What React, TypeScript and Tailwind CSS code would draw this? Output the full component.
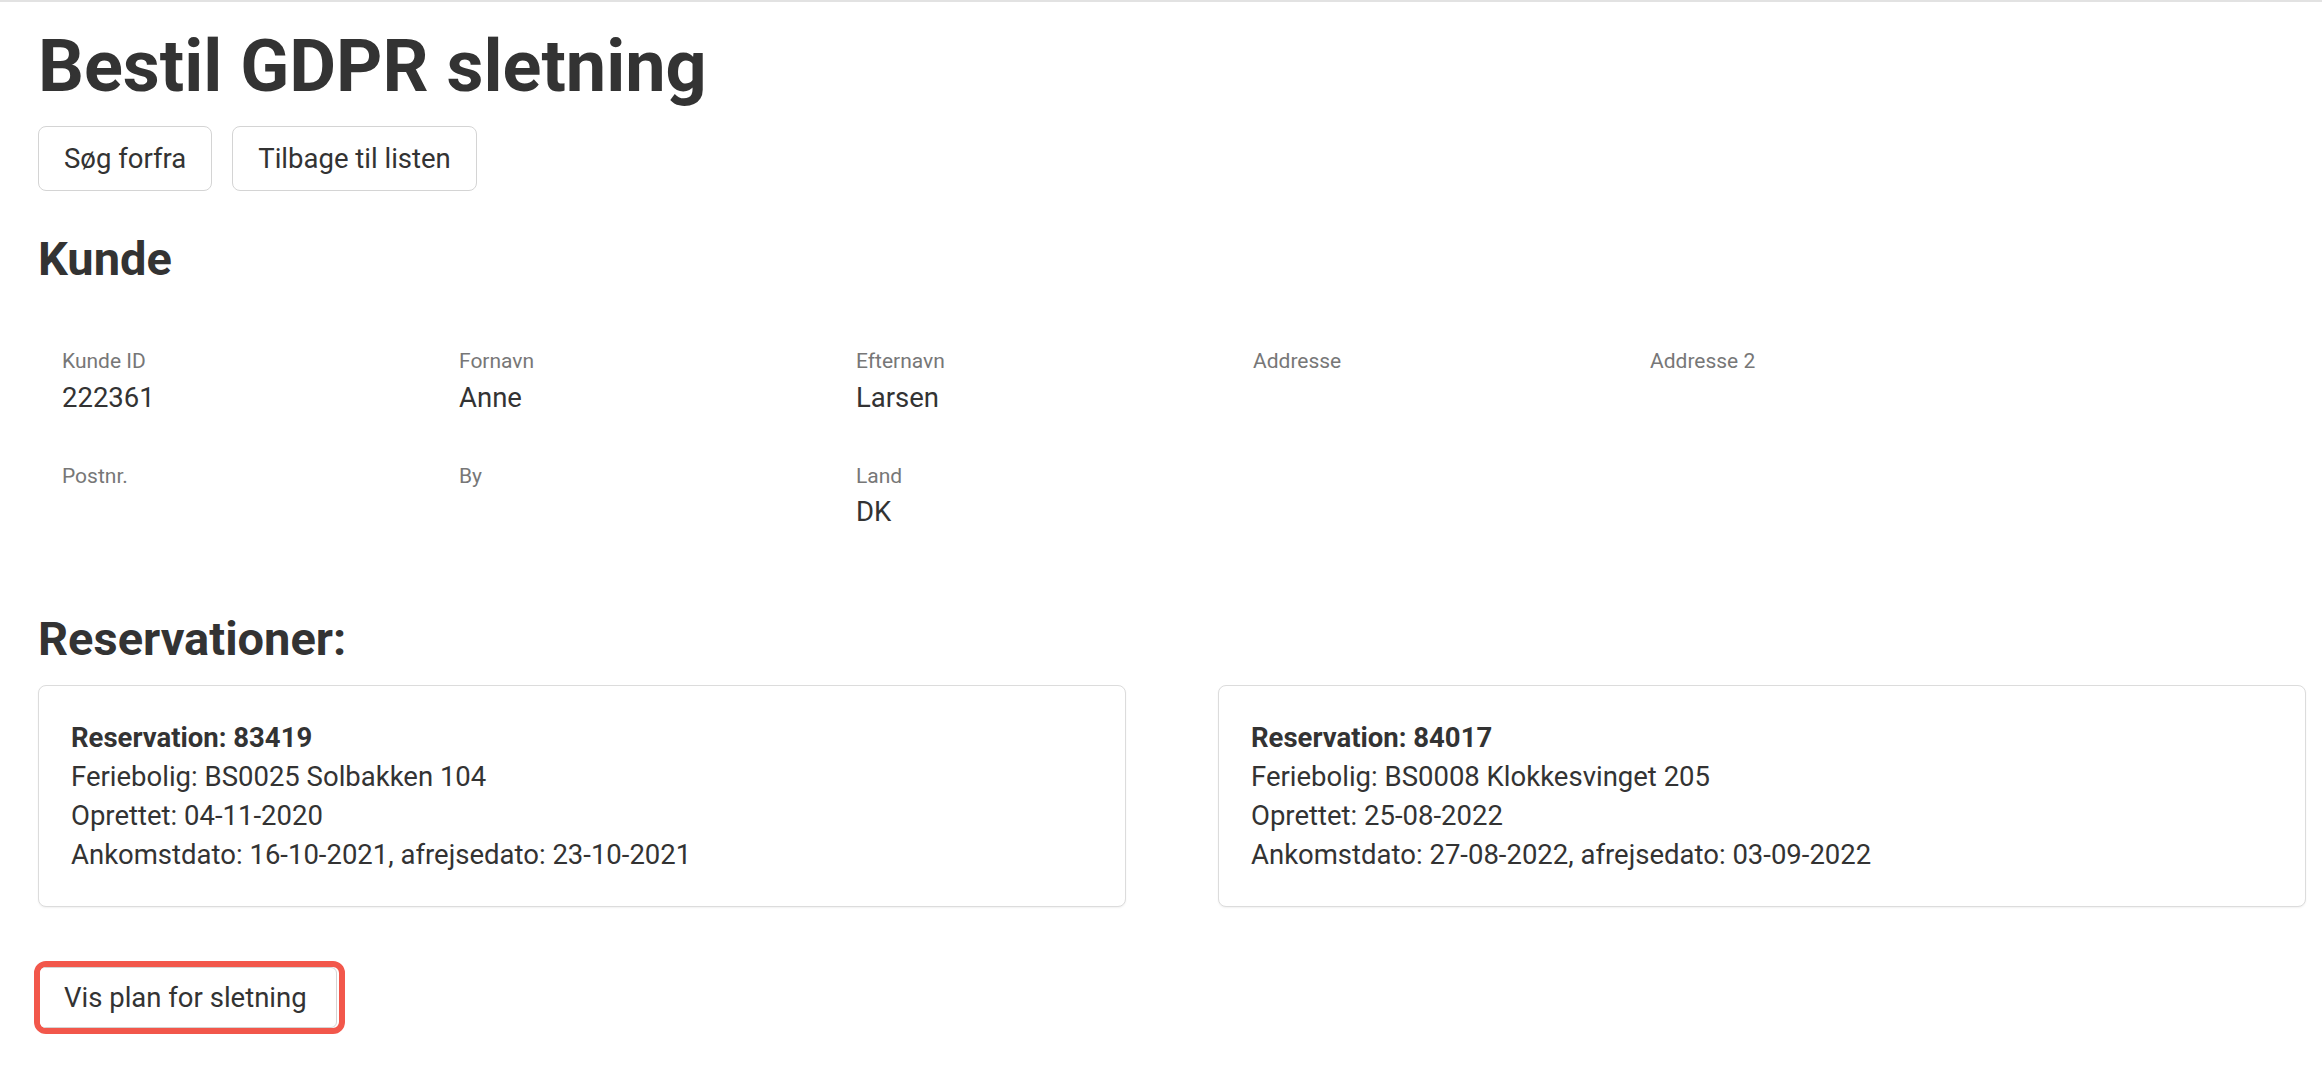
const fields = [
  { label: 'Kunde ID', value: '222361' },
  { label: 'Fornavn', value: 'Anne' },
  { label: 'Efternavn', value: 'Larsen' },
  { label: 'Addresse', value: '' },
  { label: 'Addresse 2', value: '' },
  { label: 'Postnr.', value: '' },
  { label: 'By', value: '' },
  { label: 'Land', value: 'DK' },
];

const reservations = [
  {
    id: '83419',
    house: 'BS0025 Solbakken 104',
    created: '04-11-2020',
    arrival: '16-10-2021',
    departure: '23-10-2021',
  },
  {
    id: '84017',
    house: 'BS0008 Klokkesvinget 205',
    created: '25-08-2022',
    arrival: '27-08-2022',
    departure: '03-09-2022',
  },
];

function Field({ label, value }: { label: string; value: string }) {
  return (
    <div className="flex flex-col">
      <span className="text-[21px] leading-[31.5px] text-[#777]">{label}</span>
      <span className="min-h-[39px] text-[27.5px] leading-[39px] text-[#333]">{value}</span>
    </div>
  );
}

export default function App() {
  return (
    <div className="min-h-screen border-t-2 border-[#e2e2e2] bg-white pl-[38px] pr-[16px] font-['Roboto',sans-serif] text-[#333]">
      <h1 className="mt-[19px] text-[72px] font-bold leading-[92px]">Bestil GDPR sletning</h1>

      <div className="mt-[13px] flex gap-[20px]">
        <button
          type="button"
          className="h-[65px] rounded-[8px] border border-[#d4d4d4] bg-white px-[25px] text-[27.5px] text-[#333]"
        >
          Søg forfra
        </button>
        <button
          type="button"
          className="h-[65px] rounded-[8px] border border-[#d4d4d4] bg-white px-[25px] text-[27.5px] text-[#333]"
        >
          Tilbage til listen
        </button>
      </div>

      <h2 className="mt-[40px] text-[47px] font-bold leading-[55px]">Kunde</h2>

      <div className="mt-[60px] grid grid-cols-[repeat(5,397px)] gap-y-[44px] pl-[24px]">
        {fields.map((f) => (
          <Field key={f.label} label={f.label} value={f.value} />
        ))}
      </div>

      <h2 className="mt-[80px] text-[47px] font-bold leading-[55px]">Reservationer:</h2>

      <div className="mt-[19px] grid grid-cols-2 gap-[92px]">
        {reservations.map((r) => (
          <div
            key={r.id}
            className="rounded-[8px] border border-[#dcdcdc] bg-white p-[32px] text-[27.5px] leading-[39px] shadow-[0_1px_2px_rgba(0,0,0,0.06)]"
          >
            <div className="font-bold">Reservation: {r.id}</div>
            <div>Feriebolig: {r.house}</div>
            <div>Oprettet: {r.created}</div>
            <div>
              Ankomstdato: {r.arrival}, afrejsedato: {r.departure}
            </div>
          </div>
        ))}
      </div>

      <div className="-ml-[4px] mt-[54px] inline-flex h-[73px] w-[311px] overflow-hidden rounded-[12px] border-[6px] border-[#f2574b]">
        <button
          type="button"
          className="-ml-[2px] h-full w-[299px] rounded-[6px] border border-[#d4d4d4] bg-white pl-[25px] text-left text-[27.5px] text-[#333]"
        >
          Vis plan for sletning
        </button>
      </div>
    </div>
  );
}
